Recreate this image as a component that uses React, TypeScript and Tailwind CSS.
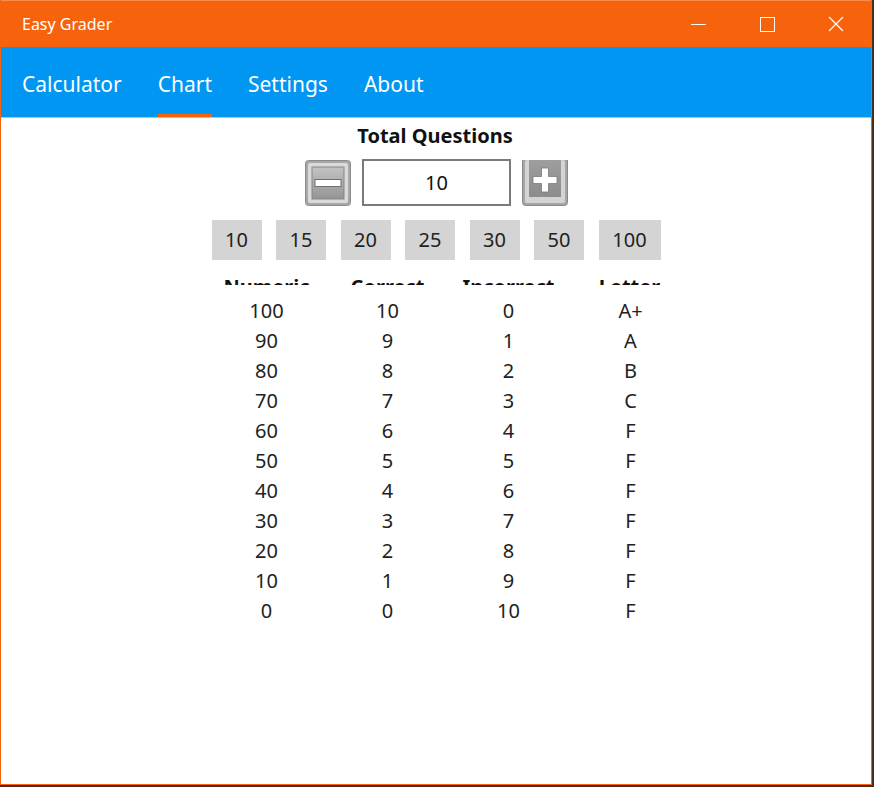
import React from "react";

const rows = [
  [100, 10, 0, "A+"],
  [90, 9, 1, "A"],
  [80, 8, 2, "B"],
  [70, 7, 3, "C"],
  [60, 6, 4, "F"],
  [50, 5, 5, "F"],
  [40, 4, 6, "F"],
  [30, 3, 7, "F"],
  [20, 2, 8, "F"],
  [10, 1, 9, "F"],
  [0, 0, 10, "F"],
];

const presets = ["10", "15", "20", "25", "30", "50", "100"];
const tabs = ["Calculator", "Chart", "Settings", "About"];

function MinusButton() {
  return (
    <svg width="46" height="46" viewBox="0 0 46 46">
      <defs>
        <linearGradient id="mInner" x1="0" y1="0" x2="0" y2="1">
          <stop offset="0" stopColor="#c4c4c4" />
          <stop offset="1" stopColor="#949494" />
        </linearGradient>
      </defs>
      <rect x="0.5" y="0.5" width="45" height="45" rx="3" fill="#a8a8a8" stroke="#8a8a8a" />
      <rect x="3" y="3" width="40" height="40" rx="2" fill="#dadada" />
      <rect x="7" y="7" width="32" height="32" fill="url(#mInner)" stroke="#858585" />
      <rect x="10" y="19.5" width="26" height="7" fill="#ffffff" stroke="#6f6f6f" />
    </svg>
  );
}

function PlusButton() {
  return (
    <svg width="46" height="46" viewBox="0 0 46 46">
      <defs>
        <linearGradient id="pInner" x1="0" y1="0" x2="0" y2="1">
          <stop offset="0" stopColor="#9e9e9e" />
          <stop offset="1" stopColor="#8c8c8c" />
        </linearGradient>
      </defs>
      <rect x="0.5" y="-4" width="45" height="49.5" rx="3" fill="#a6a6a6" stroke="#8a8a8a" />
      <rect x="3" y="0" width="40" height="43" rx="2" fill="#d4d4d4" />
      <rect x="7" y="0" width="32" height="37" fill="url(#pInner)" />
      <path d="M19.5 8 H26.5 V16.5 H35 V23.5 H26.5 V32 H19.5 V23.5 H11 V16.5 H19.5 Z" fill="#ffffff" stroke="#7a7a7a" strokeWidth="0.8" />
    </svg>
  );
}

export default function App() {
  return (
    <div
      className="w-[874px] h-[787px] overflow-hidden bg-[#4a2e1c] flex"
      style={{ fontFamily: '"Noto Sans", "Open Sans", sans-serif' }}
    >
      <div className="w-[872px] h-[785px] flex flex-col border border-t-0 border-[#f7630c] bg-white overflow-hidden">
        {/* title bar */}
        <div className="h-[47px] bg-[#f7630c] border-t border-[#fa8a4a] flex items-center text-white shrink-0">
          <span className="pl-[21px] text-[16px] flex-1 -mt-[1px]">Easy Grader</span>
          <div className="flex items-center h-full">
            <div className="w-[46px] h-full flex items-center justify-center">
              <div className="w-[15px] h-px bg-white" />
            </div>
            <div className="w-[46px] ml-[23px] h-full flex items-center justify-center">
              <div className="w-[15px] h-[15px] border border-white" />
            </div>
            <div className="w-[46px] ml-[23px] mr-[12px] h-full flex items-center justify-center">
              <svg width="16" height="16" viewBox="0 0 16 16">
                <path d="M1 1 L15 15 M15 1 L1 15" stroke="#ffffff" strokeWidth="1.2" />
              </svg>
            </div>
          </div>
        </div>

        {/* nav */}
        <div className="h-[71px] bg-[#0096f2] border-b border-[#8fd0fb] flex items-stretch pl-[21px] gap-[36px] shrink-0">
          {tabs.map((t) => (
            <div key={t} className="relative flex items-center text-white text-[21px]">
              <span className="mt-[5px]">{t}</span>
              {t === "Chart" && (
                <div className="absolute left-0 right-0 bottom-0 h-[3px] bg-[#f7630c]" />
              )}
            </div>
          ))}
        </div>

        {/* content */}
        <div className="flex flex-col items-center text-[#111] pt-[3px]">
          <div className="text-[20px] font-bold leading-[30px] -ml-[2px]">Total Questions</div>
          <div className="flex items-center mt-[8px] gap-[11px] ml-[1px]">
            <MinusButton />
            <div className="w-[149px] h-[47px] border-2 border-[#7a7a7a] flex items-center justify-center text-[20px]">
              10
            </div>
            <PlusButton />
          </div>
          <div className="flex gap-[14.5px] mt-[14px]">
            {presets.map((p) => (
              <div
                key={p}
                className={`${p === "100" ? "w-[62px]" : "w-[50px]"} h-[40px] bg-[#d4d4d4] flex items-center justify-center text-[20px] text-[#222]`}
              >
                {p}
              </div>
            ))}
          </div>

          <div className="ml-[24px] mt-[16px]">
            <div className="h-[9px] overflow-hidden">
              <div className="-mt-[3px] grid grid-cols-[121px_121px_121px_121px] text-[20px] font-bold leading-[28px] text-center">
                <div>Numeric</div>
                <div>Correct</div>
                <div>Incorrect</div>
                <div>Letter</div>
              </div>
            </div>
            <div className="mt-[11px] grid grid-cols-[121px_121px_121px_121px] text-[20px] leading-[30px] text-center text-[#222]">
              {rows.map((r) =>
                r.map((c, i) => (
                  <div key={`${r[0]}-${i}`} className={i === 3 ? "-mr-[2px]" : ""}>
                    {c}
                  </div>
                ))
              )}
            </div>
          </div>
        </div>
      </div>
    </div>
  );
}
